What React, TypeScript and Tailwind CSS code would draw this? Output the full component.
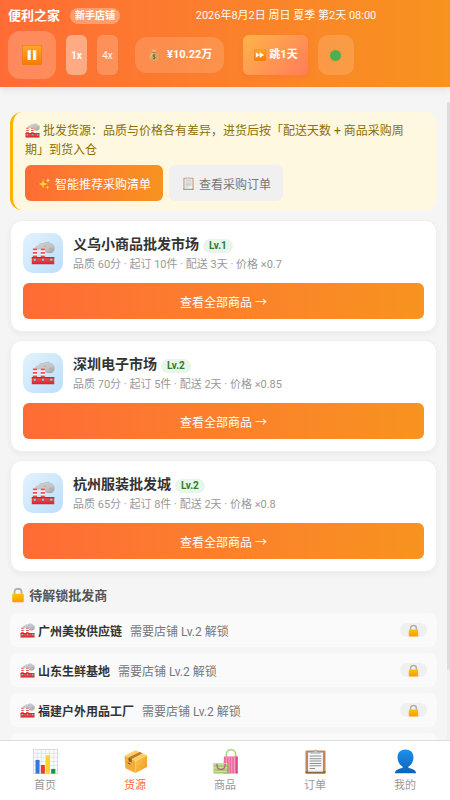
import { useState, type ReactNode, type UIEvent } from "react";

const suppliers = [
  { name: "义乌小商品批发市场", level: 1, info: "品质 60分 · 起订 10件 · 配送 3天 · 价格 ×0.7" },
  { name: "深圳电子市场", level: 2, info: "品质 70分 · 起订 5件 · 配送 2天 · 价格 ×0.85" },
  { name: "杭州服装批发城", level: 2, info: "品质 65分 · 起订 8件 · 配送 2天 · 价格 ×0.8" },
];

const lockedSuppliers = [
  { name: "广州美妆供应链", need: "需要店铺 Lv.2 解锁" },
  { name: "山东生鲜基地", need: "需要店铺 Lv.2 解锁" },
  { name: "福建户外用品工厂", need: "需要店铺 Lv.2 解锁" },
  { name: "云南特产合作社", need: "需要店铺 Lv.3 解锁" },
];

type IconProps = { className?: string };

function Art({ className = "size-[15px]", children }: IconProps & { children: ReactNode }) {
  return (
    <svg viewBox="0 0 32 32" aria-hidden="true" className={`inline-block shrink-0 ${className}`}>
      {children}
    </svg>
  );
}

function Factory({ className }: IconProps) {
  return (
    <Art className={className}>
      <defs>
        <linearGradient id="smoke" x1="0" y1="0" x2="1" y2="1">
          <stop offset="0" stopColor="#d2d2d2" />
          <stop offset=".6" stopColor="#c4c4c4" />
          <stop offset="1" stopColor="#a2a2a2" />
        </linearGradient>
        <linearGradient id="hall" x1="0" y1="0" x2="0" y2="1">
          <stop offset="0" stopColor="#d32f2f" />
          <stop offset=".35" stopColor="#f04545" />
          <stop offset="1" stopColor="#d0262b" />
        </linearGradient>
      </defs>
      <path fill="url(#smoke)" stroke="#a6a6a6" strokeWidth=".5" d="M5.500 9.500C5.500 7.500 8 6.500 10 6.500C11 3.500 14 2.500 16.500 3.500C19.500 .500 25 1 26.500 3.500C30 4 31.500 7 31 10.500C31 14.500 27 17 23 15.500C21 16.500 19.500 15 18.500 12.500C16 12.500 14 11 12.500 9.500C10 11 6 11.500 5.500 9.500Z" />
      <path fill="none" stroke="#a6a6a6" strokeWidth=".8" d="M16.500 8C17.500 6 20 6 21 7.500M24 11C25 9 28 9 29 11" />
      {[2.5, 13].map((x) => (
        <g key={x}>
          <rect x={x} y="10" width="5.5" height="12" fill="#fafafa" />
          <path fill="#ee4b48" d={`M${x} 10h5.500v2.200h-5.500zM${x} 14.700h5.500v2.200h-5.500zM${x} 19.400h5.500v2.200h-5.500z`} />
        </g>
      ))}
      <rect x="1" y="21.5" width="30" height="9.5" fill="url(#hall)" />
      <path fill="#b71c1c" d="M1 21.500h30v1H1z" />
      {[5, 16, 27].map((x) => (
        <circle key={x} cx={x} cy="25" r="1.900" fill="#7fd3f7" stroke="#9c1a1d" strokeWidth=".4" />
      ))}
    </Art>
  );
}

function Lock({ className }: IconProps) {
  return (
    <Art className={className}>
      <defs>
        <linearGradient id="lockBody" x1="0" y1="0" x2="0" y2="1">
          <stop offset="0" stopColor="#ffc400" />
          <stop offset="1" stopColor="#ff9800" />
        </linearGradient>
      </defs>
      <path fill="none" stroke="#b0b0b0" strokeWidth="3.600" d="M9 15V9.500C9 5.500 12 3.500 16 3.500S23 5.500 23 9.500V15" />
      <rect x="4.500" y="13.500" width="23" height="17" rx="1.500" fill="url(#lockBody)" />
    </Art>
  );
}

function KeyCap({ className, children }: IconProps & { children: ReactNode }) {
  return (
    <Art className={className}>
      <defs>
        <linearGradient id="cap" x1="0" y1="0" x2="0" y2="1">
          <stop offset="0" stopColor="#ffa726" />
          <stop offset="1" stopColor="#f57c00" />
        </linearGradient>
      </defs>
      <rect x=".5" y=".5" width="31" height="31" rx="2.500" fill="url(#cap)" stroke="#e07a10" strokeWidth="1" />
      {children}
    </Art>
  );
}

function MoneyBag({ className }: IconProps) {
  return (
    <Art className={className}>
      <path fill="#d3a868" d="M11 9C5 14 2 20 3 25C4 30 9 31 16 31S28 30 29 25C30 20 27 14 21 9Z" />
      <path fill="#e6c48e" d="M11 10C7 15 5 19 6 23C9 19 13 14 14 10Z" />
      <path fill="#e2bd85" d="M10 2C12 4 14 1 16 2.500C18 1 20 4 22 2L21 8H11Z" />
      <path fill="#9a6c36" d="M11 7.500h10v2H11z" />
      <path fill="none" stroke="#6b4d22" strokeWidth="1.800" d="M19.500 17C18 15 13.500 15 13.500 18C13.500 21 19.500 20 19.500 23C19.500 26 14.500 26 12.500 24M16.500 13.500V27.500" />
    </Art>
  );
}

function Sparkles({ className }: IconProps) {
  return (
    <Art className={className}>
      <path fill="#fdd835" d="M12.500 5L15 14L24 17L15 20L12.500 29L10 20L1.500 17L10 14Z" />
      <path fill="#ffe082" d="M24.500 3L26 7L30 8.500L26 10L24.500 14L23 10L19.500 8.500L23 7Z" />
      <path fill="#fdd835" d="M23.500 21L24.700 24.800L28.500 26L24.700 27.200L23.500 31L22.300 27.200L18.500 26L22.300 24.800Z" />
    </Art>
  );
}

function Clipboard({ className }: IconProps) {
  return (
    <Art className={className}>
      <rect x="3.200" y="2" width="25.600" height="29.500" rx="1.500" fill="#b98a5c" />
      <path fill="#94653b" d="M3.200 28.500h25.600v1.500a1.500 1.500 0 0 1-1.500 1.500h-22.600a1.500 1.500 0 0 1-1.500-1.500z" />
      <rect x="6.500" y="4.500" width="19" height="24.500" fill="#f8f8f8" />
      <path fill="#d2d2d2" d="M6.500 27.800h19v1.200h-19z" />
      <path fill="#c9c9c9" stroke="#8e8e8e" strokeWidth=".6" d="M10 5.500V3.500h4C14 .500 18 .500 18 3.500h4v2z" />
      <path stroke="#8a9090" strokeWidth="1.300" d="M8.500 9h15M8.500 12.500h15M8.500 15.500h15M8.500 18.500h15M8.500 21.500h15M8.500 25h7" />
    </Art>
  );
}

function Chart({ className }: IconProps) {
  return (
    <Art className={className}>
      <rect x=".4" y=".4" width="31.200" height="31.200" fill="#fbfbfb" stroke="#c4cdd0" strokeWidth=".8" />
      <path stroke="#d3dadd" strokeWidth=".8" d="M0 5.500h32M0 10.500h32M0 16h32M0 21h32M0 26.500h32M5.500 0v32M10.500 0v32M16 0v32M21 0v32M26.500 0v32" />
      <path fill="#3774e8" d="M3.200 14h5.200v17.500H3.200z" />
      <path fill="#e53d35" d="M10 20.500h5.200v11H10z" />
      <path fill="#fdd22e" d="M16.600 8h5.200v23.500h-5.200z" />
      <path fill="#16964b" d="M23.200 25.500h5.400v6h-5.400z" />
    </Art>
  );
}

function Parcel({ className }: IconProps) {
  return (
    <Art className={className}>
      <defs>
        <linearGradient id="parcelSide" x1="0" y1="0" x2="1" y2="1">
          <stop offset="0" stopColor="#ffca4f" />
          <stop offset="1" stopColor="#ee961e" />
        </linearGradient>
      </defs>
      <path fill="#f3ac38" d="M2 8.500L16 15.500V30.800L3 24.500Z" />
      <path fill="url(#parcelSide)" d="M16 15.500L30.800 8V23L16 30.800Z" />
      <path fill="#ffce69" d="M16 1.500L30.800 8L16 15.500L2 8.500Z" />
      <path fill="#b97a2e" d="M21.500 3.800L25 5.500L11 12.800L7 10.800Z" />
      <path fill="#8a5a22" d="M7 10.800L11 12.800V18L9.500 16L8.500 17L7 14.500Z" />
      <path stroke="#4d3a22" strokeWidth="1" d="M6 17.500L9.500 19.500" />
    </Art>
  );
}

function Bags({ className }: IconProps) {
  return (
    <Art className={className}>
      <path fill="none" stroke="#aed581" strokeWidth="2" d="M17 14V7C17 -1 29 -1 29 7V14" />
      <path fill="#f0679e" d="M14 9.500H31.500V31.500H13Z" />
      <path stroke="#f9a3c6" strokeWidth="1.400" d="M17 9.500V31.500M20.500 9.500V31.500M24 9.500V31.500M27.500 9.500V31.500" />
      <path fill="#d94a86" d="M29.500 9.500h2v22h-2z" />
      <path fill="#a5ce77" d="M.5 18H18.500V31.500H.5Z" />
      <path fill="#c5e59f" d="M.5 18h18v2H.5zM.5 23h18v2H.5zM.5 28h18v1.500H.5z" />
      <path fill="#85b254" d="M18.500 18l1.500 1v12.500h-1.500z" />
      <path fill="none" stroke="#d9508b" strokeWidth="1.700" d="M5 19C5 29 15.500 29 15.500 19" />
    </Art>
  );
}

function Person({ className }: IconProps) {
  return (
    <Art className={className}>
      <defs>
        <linearGradient id="person" x1="0" y1="0" x2="0" y2="1">
          <stop offset="0" stopColor="#1e90ee" />
          <stop offset="1" stopColor="#0d62b8" />
        </linearGradient>
      </defs>
      <path fill="url(#person)" d="M16 .500C22 .500 26.200 4 26.200 10.500C26.200 15.500 23.500 20.500 19.800 22.300V24.200C25.500 25 29.500 27 29.500 31H2.500C2.500 27 6.500 25 12.200 24.200V22.300C8.500 20.500 5.800 15.500 5.800 10.500C5.800 4 10 .500 16 .500Z" />
    </Art>
  );
}

const tabs = [
  { Icon: Chart, label: "首页" },
  { Icon: Parcel, label: "货源" },
  { Icon: Bags, label: "商品" },
  { Icon: Clipboard, label: "订单" },
  { Icon: Person, label: "我的" },
];

function Header() {
  const [speed, setSpeed] = useState("1x");
  return (
    <header className="relative z-10 shrink-0 bg-linear-to-r from-[#ff6b35] to-[#f7931e] px-2 pt-[7px] pb-2 text-white shadow-[0_2px_8px_rgba(0,0,0,0.1)]">
      <div className="flex h-[18px] items-center gap-[10px]">
        <h1 className="text-[13px] leading-5 font-bold">便利之家</h1>
        <span className="rounded-full bg-white/30 px-[5px] text-[10px] leading-4 font-bold">新手店铺</span>
        <time className="flex-1 text-center text-[11px] leading-4 opacity-95">2026年8月2日 周日 夏季 第2天 08:00</time>
      </div>
      <div className="mt-[6px] flex items-center gap-[10px]">
        <button aria-label="暂停" className="flex size-12 items-center justify-center rounded-xl bg-white/20">
          <KeyCap className="size-5">
            <path fill="#fff" d="M9 8.500h5.200v15.500H9zM17.500 8.500h5.200v15.500h-5.200z" />
            <path fill="#d9d9d9" d="M13 8.500h1.200v15.500H13zM21.500 8.500h1.200v15.500h-1.200z" />
          </KeyCap>
        </button>
        {["1x", "4x"].map((s) => (
          <button
            key={s}
            onClick={() => setSpeed(s)}
            className={`h-10 w-[21px] rounded-md text-[10px] ${s === speed ? "bg-white/40 font-bold" : "bg-white/20 text-white/90"}`}
          >
            {s}
          </button>
        ))}
        <div className="mr-[9px] ml-[7px] flex h-9 items-center gap-[6px] rounded-xl bg-white/15 px-3 text-[11px] leading-4 font-bold">
          <span className="flex w-[14px] justify-center">
            <MoneyBag className="size-3" />
          </span>
          <span>¥10.22万</span>
        </div>
        <button className="flex h-10 items-center gap-[2px] rounded-md bg-linear-135 from-[#ffb347] to-[#ff7b5a] px-[10px] text-[11px] leading-4 font-bold shadow-[0_2px_4px_rgba(255,107,53,0.3)]">
          <span className="flex w-[14px] justify-center">
            <KeyCap className="size-3">
              <path fill="#fff" d="M5 8.500L15 16L5 23.500ZM15 8.500L27 16L15 23.500Z" />
            </KeyCap>
          </span>
          跳1天
        </button>
        <button aria-label="状态" className="flex h-10 w-9 items-center justify-center rounded-[10px] bg-white/15">
          <span className="size-[11px] rounded-full bg-[#4caf50]" />
        </button>
      </div>
    </header>
  );
}

function Notice() {
  return (
    <section className="mb-[10px] rounded-xl border-l-3 border-[#ffb300] bg-[#fff8e1] px-3 pt-[10px] pb-[9px] text-[12px] leading-[19px] text-[#8d6e00]">
      <p className="pr-2">
        <Factory className="size-[15px] align-[-3px]" /> 批发货源：品质与价格各有差异，进货后按「配送天数 + 商品采购周期」到货入仓
      </p>
      <div className="mt-[5px] flex gap-[6px]">
        <button className="flex h-9 items-center gap-[3px] rounded-md bg-linear-to-r from-[#ff6b35] to-[#f7931e] px-3 text-white">
          <Sparkles className="size-[15px] p-px" />
          <span className="leading-[normal]">智能推荐采购清单</span>
        </button>
        <button className="flex h-9 items-center gap-[3px] rounded-md bg-[#f0f0f0] px-3 text-[#777]">
          <Clipboard className="size-[15px] p-px opacity-70" />
          <span className="leading-[normal]">查看采购订单</span>
        </button>
      </div>
    </section>
  );
}

export default function App() {
  const [active, setActive] = useState("货源");
  const [scrolled, setScrolled] = useState(0);

  const onScroll = (e: UIEvent<HTMLElement>) => {
    const el = e.currentTarget;
    setScrolled(el.scrollTop / Math.max(1, el.scrollHeight - el.clientHeight));
  };

  return (
    <div className="flex h-screen flex-col bg-[#f5f5f5] font-[Roboto,'Noto_Sans_CJK_SC',sans-serif] leading-[normal] text-[#333]">
      <Header />
      <div className="mt-[15px] flex min-h-0 flex-1">
        <main onScroll={onScroll} className="min-w-0 flex-1 overflow-y-auto p-[10px] [scrollbar-width:none]">
          <Notice />
          <div className="flex flex-col gap-2">
            {suppliers.map((s) => (
              <article key={s.name} className="rounded-xl border border-[#f0f0f0] bg-white p-3 shadow-[0_2px_6px_rgba(0,0,0,0.05)]">
                <div className="flex gap-[10px]">
                  <div className="flex size-10 shrink-0 items-center justify-center rounded-[10px] bg-linear-135 from-[#e3f2fd] to-[#bbdefb]">
                    <Factory className="size-6" />
                  </div>
                  <div className="min-w-0">
                    <div className="flex h-[22px] items-center gap-1">
                      <h2 className="text-[14px] leading-[21px] font-bold">{s.name}</h2>
                      <span className="mt-[3px] rounded-full bg-[#e8f5e9] px-[6px] text-[10px] leading-[14px] font-bold text-[#2e7d32]">Lv.{s.level}</span>
                    </div>
                    <p className="text-[11px] leading-5 text-[#999]">{s.info}</p>
                  </div>
                </div>
                <button className="mt-[8px] h-9 w-full rounded-md bg-linear-to-r from-[#ff6b35] to-[#f7931e] text-[12px] text-white">查看全部商品 →</button>
              </article>
            ))}
          </div>
          <h2 className="mt-[14px] mb-[7px] text-[13px] leading-5 font-bold text-[#555]">
            <Lock className="size-4 align-[-3px]" /> 待解锁批发商
          </h2>
          <ul className="flex flex-col gap-[6px]">
            {lockedSuppliers.map((s) => (
              <li key={s.name} className="flex h-[34px] items-center gap-2 rounded-lg bg-[#fafafa] px-[10px] text-[12px]">
                <span className="flex items-center gap-[3px] font-bold">
                  <Factory className="size-[15px]" />
                  {s.name}
                </span>
                <span className="text-[#777]">{s.need}</span>
                <span className="ml-auto flex h-[14px] items-center rounded-full bg-[#f0f0f0] px-[7px]">
                  <Lock className="size-[13px]" />
                </span>
              </li>
            ))}
          </ul>
        </main>
        <div aria-hidden="true" className="flex w-[3px] shrink-0 flex-col bg-[#f1f1f1]">
          <div style={{ flexGrow: scrolled }} />
          <div className="h-[89%] shrink-0 rounded-[3px] bg-[#ddd]" />
        </div>
      </div>
      <nav className="grid h-15 shrink-0 grid-cols-5 border-t border-[#ddd] bg-white">
        {tabs.map(({ Icon, label }) => (
          <button
            key={label}
            onClick={() => setActive(label)}
            className={`flex flex-col items-center gap-1 pt-2 text-[11px] ${label === active ? "text-[#ff6b35]" : "text-[#999]"}`}
          >
            <Icon className="size-[25px]" />
            <span className="leading-4">{label}</span>
          </button>
        ))}
      </nav>
    </div>
  );
}
